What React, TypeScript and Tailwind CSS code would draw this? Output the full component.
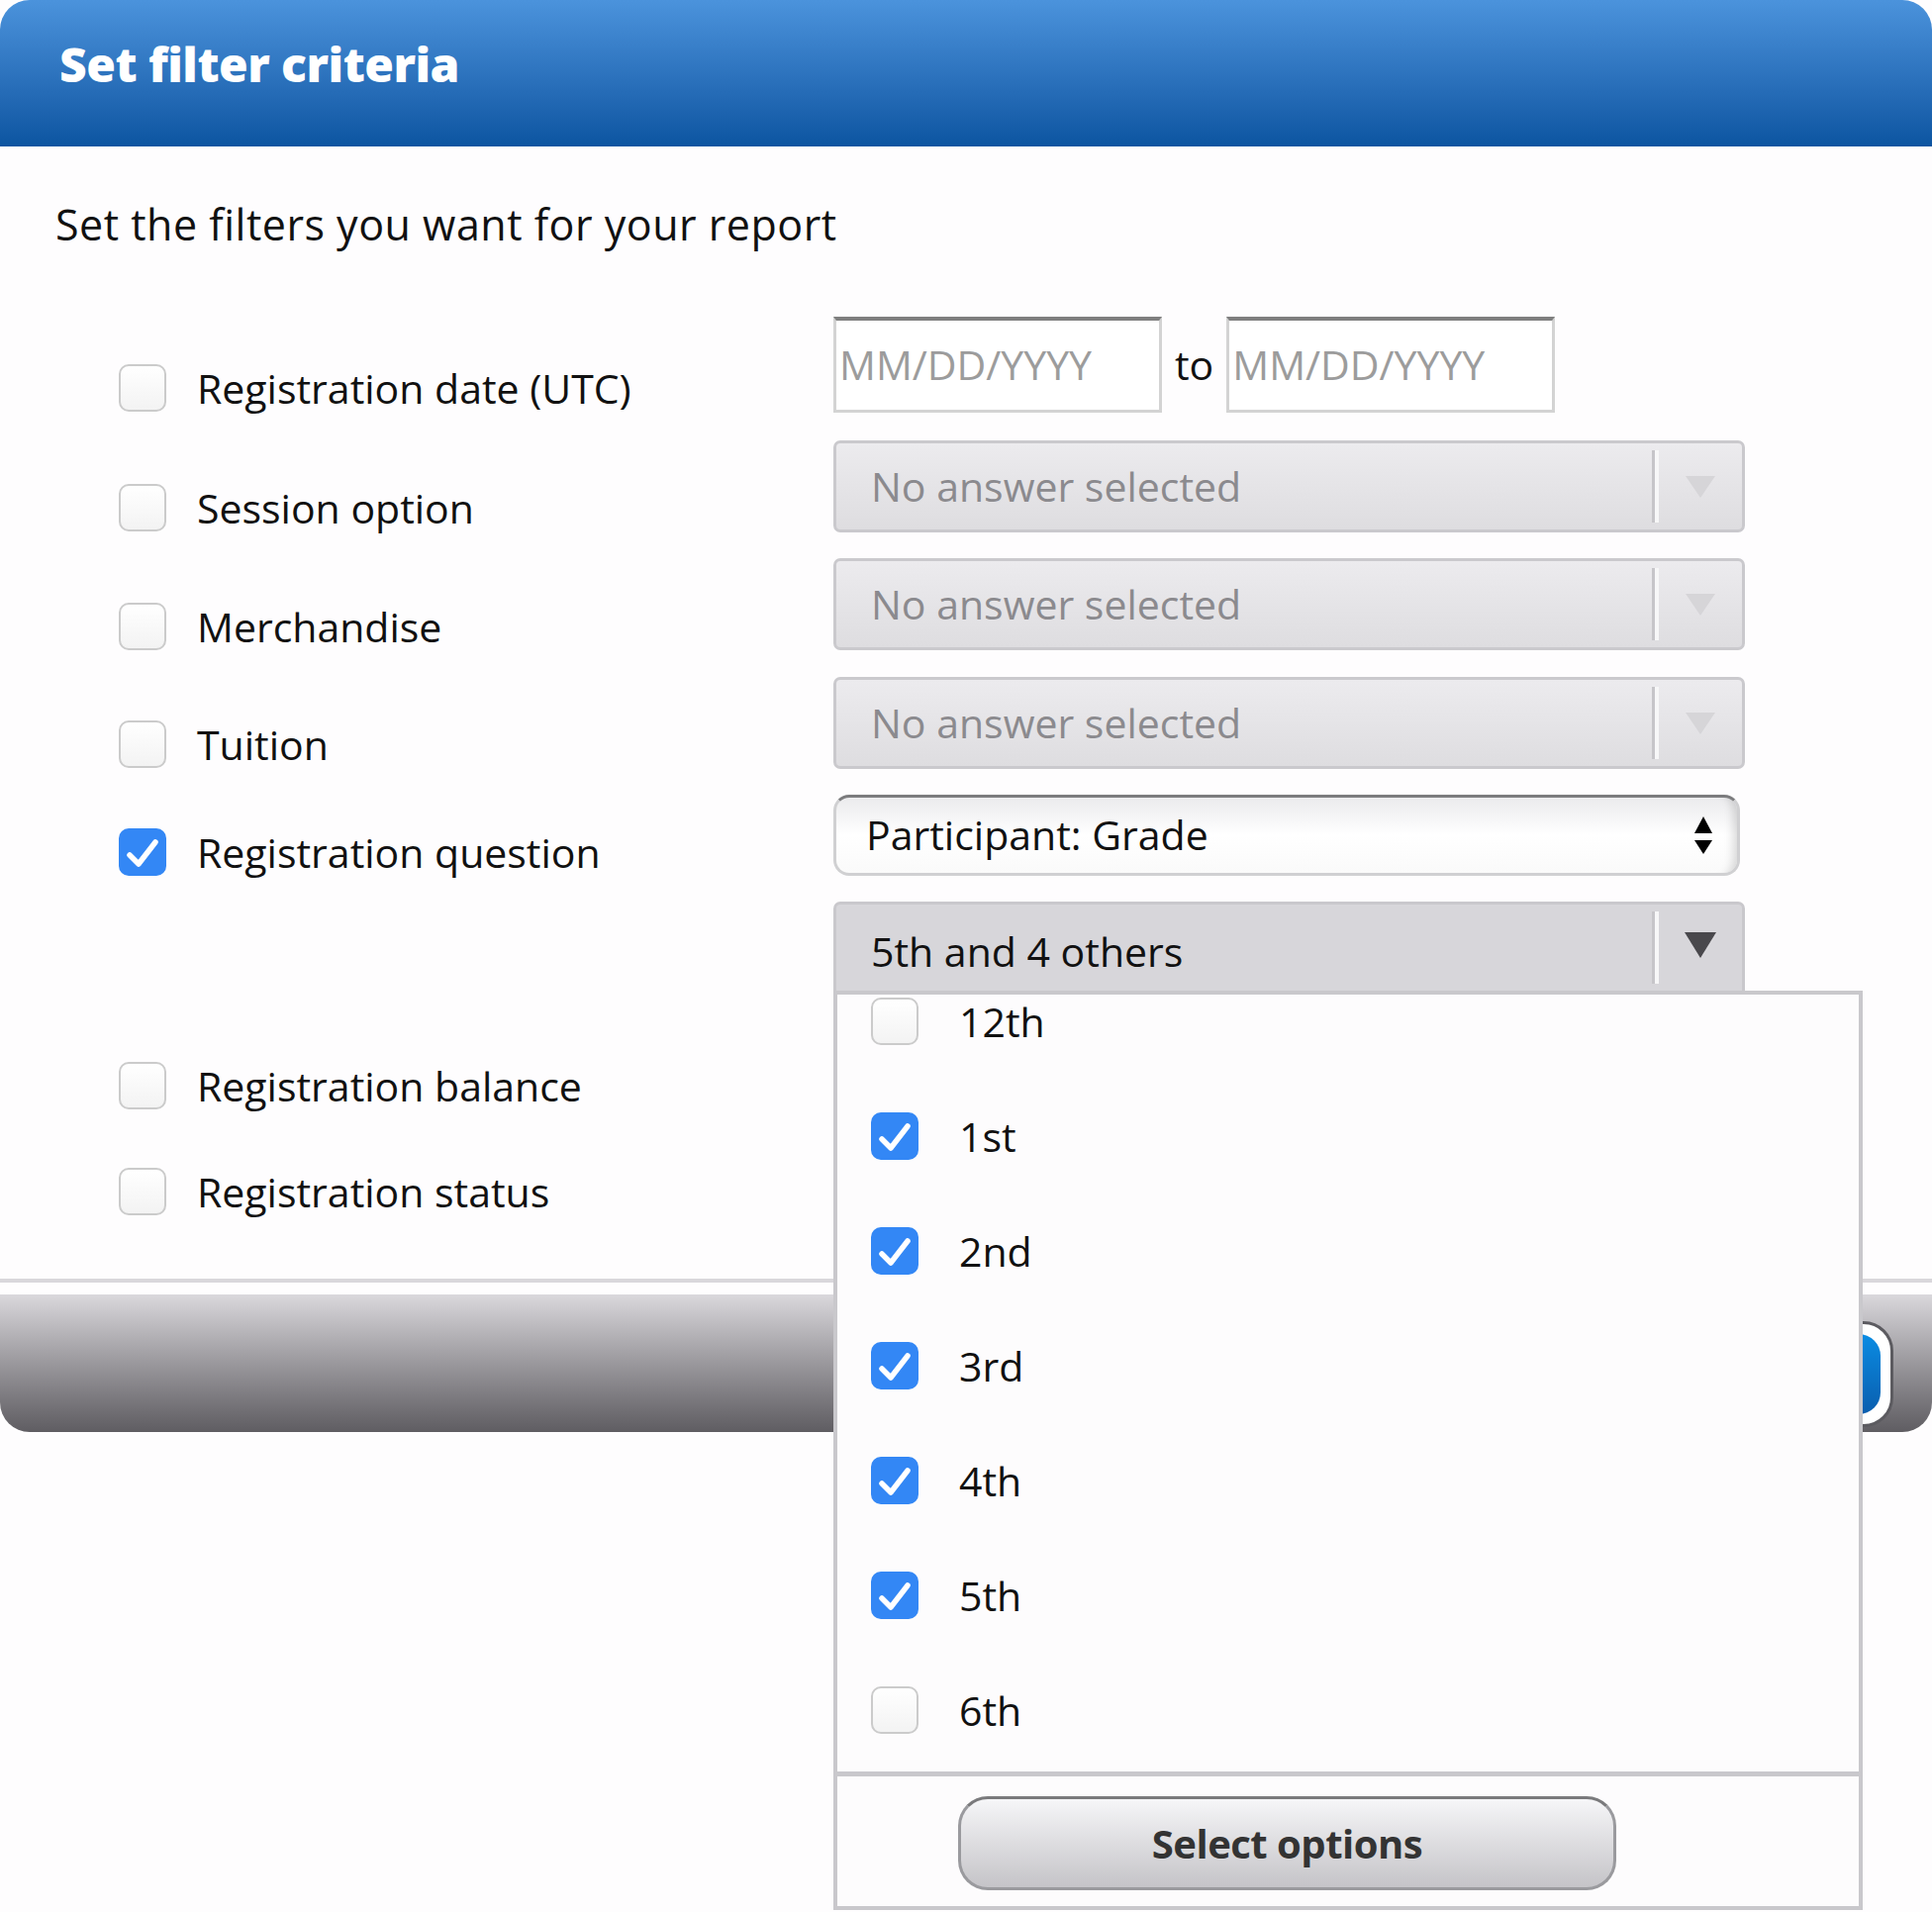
import React from 'react';

const font = "font-['Open_Sans',sans-serif]";

const Check = () => (
  <svg viewBox="0 0 48 48" className="w-full h-full">
    <path d="M11 27 L20 36 L37 14" fill="none" stroke="white" strokeWidth="5.5" strokeLinecap="round" strokeLinejoin="round" />
  </svg>
);

const Box = ({ checked }: { checked?: boolean }) =>
  checked ? (
    <div className="w-[48px] h-[48px] rounded-[10px] bg-[#3387f5] shrink-0">
      <Check />
    </div>
  ) : (
    <div className="w-[48px] h-[48px] rounded-[10px] border-2 border-[#cbcbcb] bg-linear-to-b from-white to-[#f3f3f3] shrink-0" />
  );

const Divider = () => (
  <div className="flex h-[73px]">
    <div className="w-[3px] bg-[#c6c5c9]" />
    <div className="w-[4px] bg-[#f7f7f8]" />
  </div>
);

const DisabledSelect = ({ mt }: { mt: string }) => (
  <div className={`${mt} h-[93px] flex items-center rounded-[7px] border-[3px] border-[#cac9cd] bg-linear-to-b from-[#ecebee] to-[#dedde0]`}>
    <span className="flex-1 pl-[35px] text-[41px] text-[#8b8a8e]">No answer selected</span>
    <Divider />
    <div className="w-[84px] flex justify-center">
      <svg width="34" height="26" viewBox="0 0 34 26">
        <path d="M2 2 H32 L17 24 Z" fill="#d6d5d8" />
      </svg>
    </div>
  </div>
);

const leftRows = [
  { label: 'Registration date (UTC)', mt: 'mt-[48px]' },
  { label: 'Session option', mt: 'mt-[73px]' },
  { label: 'Merchandise', mt: 'mt-[72px]' },
  { label: 'Tuition', mt: 'mt-[71px]' },
  { label: 'Registration question', mt: 'mt-[61px]', checked: true },
  { label: 'Registration balance', mt: 'mt-[188px]' },
  { label: 'Registration status', mt: 'mt-[59px]' },
];

const grades = [
  { label: '12th', checked: false },
  { label: '1st', checked: true },
  { label: '2nd', checked: true },
  { label: '3rd', checked: true },
  { label: '4th', checked: true },
  { label: '5th', checked: true },
  { label: '6th', checked: false },
];

export default function App() {
  return (
    <div className={`w-[1952px] h-[1932px] bg-[#fefdfe] overflow-hidden ${font} text-[#111]`}>
      {/* Header */}
      <div className="h-[148px] rounded-t-[30px] bg-linear-to-b from-[#4b93dc] to-[#0b55a1] px-[60px] pt-[29px]">
        <h1 className="text-[48px] font-extrabold text-white leading-[72px] tracking-[-0.5px]">Set filter criteria</h1>
      </div>

      {/* Body */}
      <div className="h-[1144px] px-[56px] pt-[57px]">
        <p className="text-[43px] leading-none tracking-[0.5px]">Set the filters you want for your report</p>

        <div className="mt-[72px] flex">
          {/* Left column */}
          <div className="w-[786px] pl-[64px] flex flex-col">
            {leftRows.map((row) => (
              <div key={row.label} className={`${row.mt} h-[48px] flex items-center gap-[31px]`}>
                <Box checked={row.checked} />
                <span className="text-[41px] leading-none">{row.label}</span>
              </div>
            ))}
          </div>

          {/* Right column */}
          <div className="w-[921px] flex flex-col">
            <div className="flex items-center gap-[13px]">
              <div className="w-[332px] h-[97px] border-[3px] border-t-[4px] border-[#d3d3d3] border-t-[#7f7f7f] bg-white flex items-center pl-[3px]">
                <span className="text-[41px] text-[#9c9c9c]">MM/DD/YYYY</span>
              </div>
              <span className="text-[41px]">to</span>
              <div className="w-[332px] h-[97px] border-[3px] border-t-[4px] border-[#d3d3d3] border-t-[#7f7f7f] bg-white flex items-center pl-[3px]">
                <span className="text-[41px] text-[#9c9c9c]">MM/DD/YYYY</span>
              </div>
            </div>

            <DisabledSelect mt="mt-[28px]" />
            <DisabledSelect mt="mt-[26px]" />
            <DisabledSelect mt="mt-[27px]" />

            {/* Question select */}
            <div className="mt-[26px] w-[916px] h-[82px] rounded-[16px] border-[3px] border-[#d0d0d2] border-t-[#7c7c7e] bg-linear-to-b from-[#ebebed] via-white to-[#fafafa] shadow-[inset_-14px_0_10px_-10px_rgba(0,0,0,0.15)] flex items-center pl-[30px] pr-[24px]">
              <span className="flex-1 text-[41px]">Participant: Grade</span>
              <svg width="20" height="40" viewBox="0 0 20 40">
                <path d="M10 1 L19 18 H1 Z" fill="#000" />
                <path d="M1 25 H19 L10 39 Z" fill="#000" />
              </svg>
            </div>

            {/* Answer multi-select */}
            <div className="relative mt-[26px]">
              <div className="h-[90px] flex items-center rounded-t-[7px] border-[3px] border-b-0 border-[#c9c8cc] bg-[#d7d6da]">
                <span className="flex-1 pl-[35px] text-[41px] pt-[8px]">5th and 4 others</span>
                <Divider />
                <div className="w-[84px] flex justify-center pb-[6px]">
                  <svg width="34" height="28" viewBox="0 0 34 28">
                    <path d="M1 1 H33 L17 27 Z" fill="#49484c" />
                  </svg>
                </div>
              </div>

              {/* Dropdown panel */}
              <div className="absolute left-0 top-full z-10 w-[1040px] h-[929px] border-[4px] border-[#c9c8cc] bg-[#fdfcfd] flex flex-col">
                <div className="h-[785px] overflow-hidden">
                  <div className="-mt-[31px] flex flex-col">
                    {grades.map((g) => (
                      <div key={g.label} className="h-[116px] flex items-center pl-[34px] gap-[41px]">
                        <Box checked={g.checked} />
                        <span className="text-[41px] leading-none">{g.label}</span>
                      </div>
                    ))}
                  </div>
                </div>
                <div className="border-t-[5px] border-[#c9c8cc] pt-[20px] pl-[122px]">
                  <button className="w-[665px] h-[95px] rounded-[30px] border-[3px] border-[#9a9a9e] border-t-[#7a7a7c] bg-linear-to-b from-[#f6f6f8] to-[#c5c4c8] text-[40px] font-bold text-[#333] tracking-[-0.5px]">
                    Select options
                  </button>
                </div>
              </div>
            </div>
          </div>
        </div>
      </div>

      {/* Footer */}
      <div className="h-[4px] bg-[#d9d7db]" />
      <div className="mt-[12px] h-[139px] rounded-b-[30px] bg-linear-to-b from-[#dad8dc] to-[#5f5d62] flex justify-end items-start pt-[27px] pr-[39px]">
        <div className="w-[400px] h-[107px] rounded-[30px] border-[3px] border-[#5c5b60] bg-white p-[10px]">
          <div className="w-full h-full rounded-[22px] bg-linear-to-b from-[#0a8ce3] to-[#0a5eae]" />
        </div>
      </div>
    </div>
  );
}
